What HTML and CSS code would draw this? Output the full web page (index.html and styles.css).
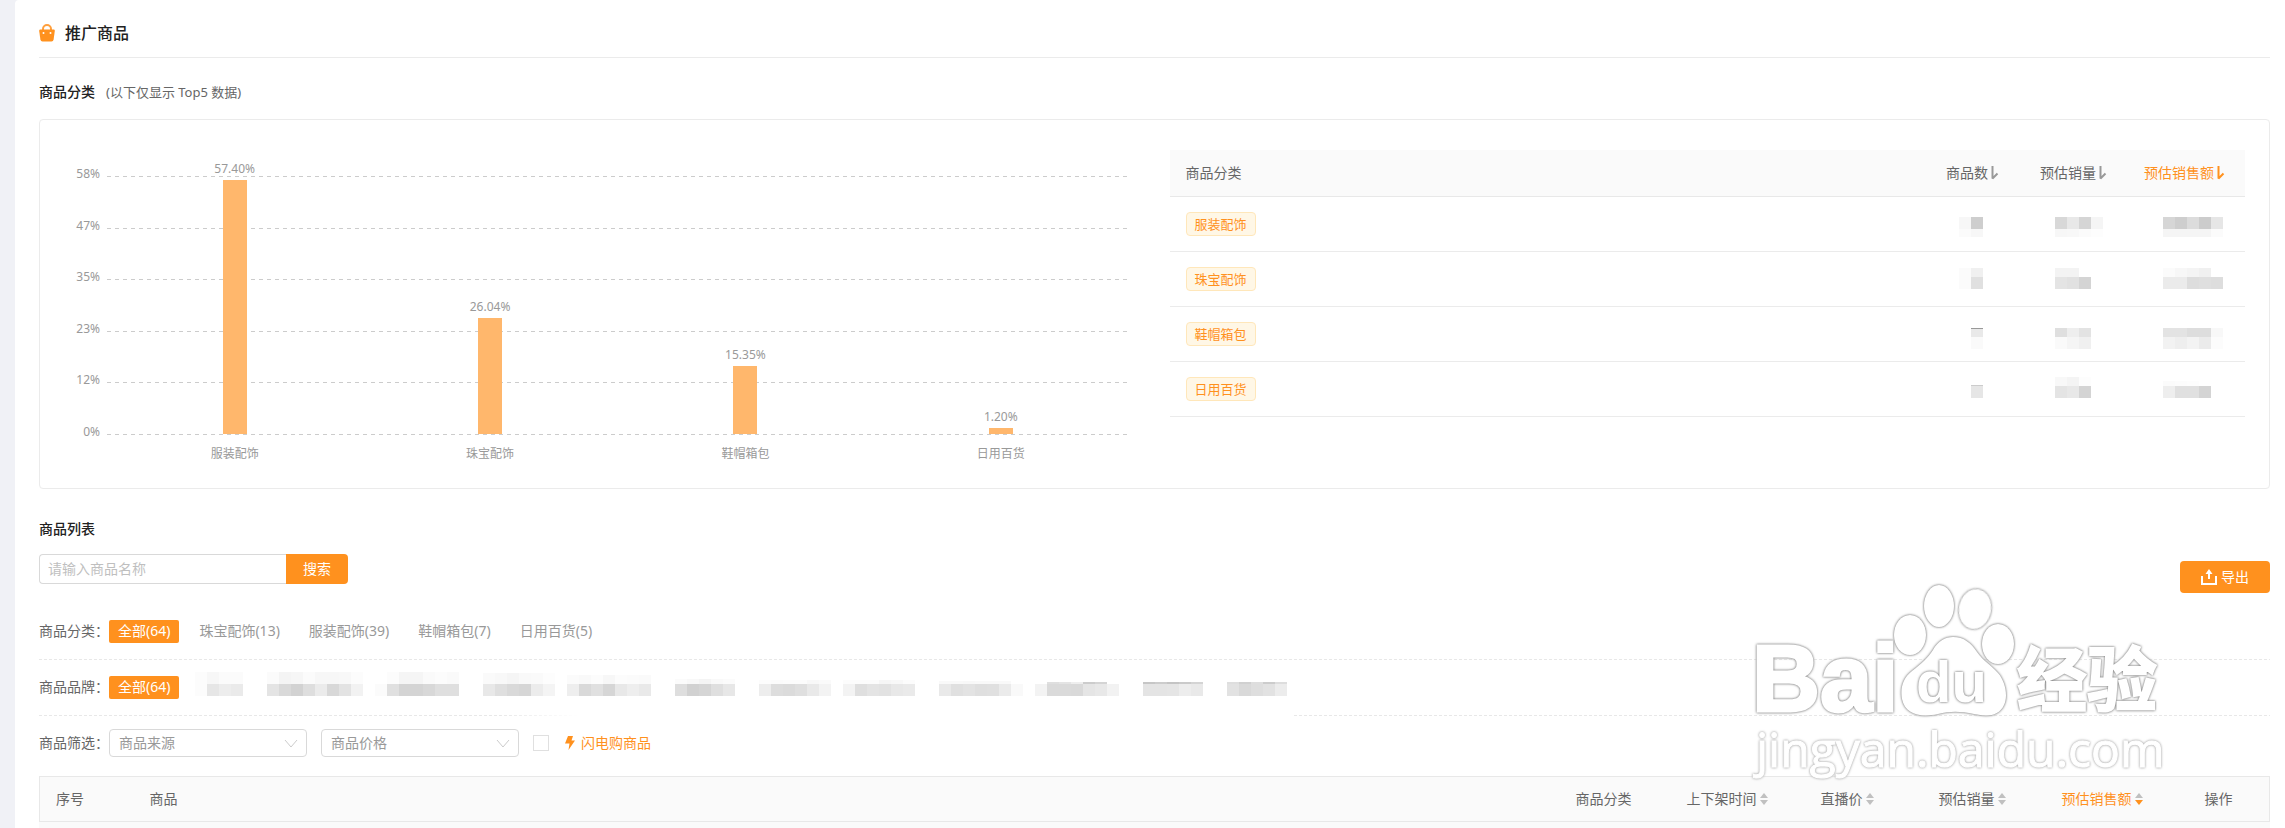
FILE: index.html
```html
<!DOCTYPE html>
<html lang="zh-CN">
<head>
    <meta charset="UTF-8">
    <meta name="viewport" content="width=device-width, initial-scale=1.0">
    <title>推广商品</title>
    <link rel="stylesheet" href="styles.css">
</head>
<body>
    <svg width="0" height="0" class="sprite" aria-hidden="true">
        <symbol id="arrow" viewBox="0 0 12 14">
            <path d="M1.500 0V12.500L6.500 7.500" fill="none" stroke="currentColor" stroke-width="2" stroke-linejoin="bevel"/>
        </symbol>
        <symbol id="chevron" viewBox="0 0 14 10">
            <path d="M1 1L7 8L13 1" fill="none" stroke="currentColor" stroke-width="1"/>
        </symbol>
    </svg>

    <main class="card">
        <header class="card-header">
            <svg class="bag-icon" width="16" height="18" viewBox="0 0 16 18">
                <path d="M4 7V5a4 4 0 0 1 8 0v2" fill="none" stroke="#ff9f3d" stroke-width="2"/>
                <path d="M1 5.500H15Q16 5.500 15.800 7L14.600 15.500Q14.300 17.500 12.500 17.500H3.500Q1.700 17.500 1.400 15.500L0.200 7Q0 5.500 1 5.500Z" fill="#ff911e"/>
                <circle cx="4.500" cy="9" r="1" fill="#fff"/>
                <circle cx="11.500" cy="9" r="1" fill="#fff"/>
            </svg>
            <h1>推广商品</h1>
        </header>

        <div class="section-title">
            <h2>商品分类</h2>
            <span class="tip">(以下仅显示 Top5 数据)</span>
        </div>

        <!-- 分类图表 + 分类表格 -->
        <section class="panel">
            <div class="chart">
                <div class="y-axis">
                    <span>58%</span><span>47%</span><span>35%</span><span>23%</span><span>12%</span><span>0%</span>
                </div>
                <div class="plot">
                    <div class="grid-lines"><i></i><i></i><i></i><i></i><i></i><i></i></div>
                    <div class="bars">
                        <div class="bar-col"><span>57.40%</span><div class="bar" style="height: 98.5%"></div></div>
                        <div class="bar-col"><span>26.04%</span><div class="bar" style="height: 44.9%"></div></div>
                        <div class="bar-col"><span>15.35%</span><div class="bar" style="height: 26.4%"></div></div>
                        <div class="bar-col"><span>1.20%</span><div class="bar" style="height: 2.3%"></div></div>
                    </div>
                </div>
                <div class="x-axis">
                    <span>服装配饰</span><span>珠宝配饰</span><span>鞋帽箱包</span><span>日用百货</span>
                </div>
            </div>

            <div class="category">
                <table class="category-table">
                    <thead>
                        <tr>
                            <th>商品分类</th>
                            <th class="num w-count"><button class="sort">商品数<svg width="12" height="14"><use href="#arrow"/></svg></button></th>
                            <th class="num w-sales"><button class="sort">预估销量<svg width="12" height="14"><use href="#arrow"/></svg></button></th>
                            <th class="num w-amount"><button class="sort active">预估销售额<svg width="12" height="14"><use href="#arrow"/></svg></button></th>
                        </tr>
                    </thead>
                    <tbody>
                        <tr>
                            <td><span class="tag">服装配饰</span></td>
                            <td class="num"><span class="mosaic" data-rows="5:ff|12:f7,ce,ff|8:fb,f7,ff"></span></td>
                            <td class="num"><span class="mosaic" data-rows="5:ff|12:d8,e8,d5,f5|8:f7,f8,fb,fd"></span></td>
                            <td class="num"><span class="mosaic" data-rows="5:ff|12:d6,ce,dc,cc,e6|8:f5,f5,f5,f5,fb"></span></td>
                        </tr>
                        <tr>
                            <td><span class="tag">珠宝配饰</span></td>
                            <td class="num"><span class="mosaic" data-rows="1:ff|9:fb,f0,ff|12:fb,e0,ff"></span></td>
                            <td class="num"><span class="mosaic" data-rows="1:ff|9:f3,f3,ff,ff|12:e4,e1,d4,ff"></span></td>
                            <td class="num"><span class="mosaic" data-rows="1:ff|9:fb,f7,f4,f0,ff|12:eb,eb,dd,df,dd"></span></td>
                        </tr>
                        <tr>
                            <td><span class="tag">鞋帽箱包</span></td>
                            <td class="num"><span class="mosaic" data-rows="6:ff|1:99,ff|8:e9,ff|12:fa,ff"></span></td>
                            <td class="num"><span class="mosaic" data-rows="6:ff|9:df,ee,e3,ff|12:fa,f5,f0,ff"></span></td>
                            <td class="num"><span class="mosaic" data-rows="6:ff|9:e3,e3,dd,dd,f8|12:f2,ee,f3,eb,fc"></span></td>
                        </tr>
                        <tr>
                            <td><span class="tag">日用百货</span></td>
                            <td class="num"><span class="mosaic" data-rows="8:ff|1:cc,ff|12:e6,ff"></span></td>
                            <td class="num"><span class="mosaic" data-rows="9:f8,f4,fd,ff|12:e4,e8,d4,ff"></span></td>
                            <td class="num"><span class="mosaic" data-rows="4:ff|5:fb,fc,fd,ff,ff|12:ee,e0,e0,d4,ff"></span></td>
                        </tr>
                    </tbody>
                </table>
            </div>
        </section>

        <h2 class="list-title">商品列表</h2>

        <div class="toolbar">
            <form class="search">
                <input type="text" placeholder="请输入商品名称" aria-label="商品名称">
                <button type="button">搜索</button>
            </form>
            <button class="export">
                <svg width="16" height="16" viewBox="0 0 16 16">
                    <path d="M1 7V15H15V7" fill="none" stroke="#fff" stroke-width="2"/>
                    <path d="M8 0L11.500 5H9V10H7V5H4.500Z" fill="#fff"/>
                </svg>
                导出
            </button>
        </div>

        <div class="filter-row dashed">
            <span class="filter-label">商品分类：</span>
            <a href="#" class="option selected">全部(64)</a>
            <a href="#" class="option">珠宝配饰(13)</a>
            <a href="#" class="option">服装配饰(39)</a>
            <a href="#" class="option">鞋帽箱包(7)</a>
            <a href="#" class="option">日用百货(5)</a>
        </div>

        <div class="filter-row dashed faded">
            <span class="filter-label">商品品牌：</span>
            <a href="#" class="option selected">全部(64)</a>
            <div class="brands">
                <span class="mosaic" data-rows="12:fc,f7,fb,fb,ff|12:fc,e6,ed,ea,ff"></span>
                <span class="mosaic" data-rows="12:fb,f4,f6,fb,f7,f7,f8,fc|12:e4,d9,d2,de,eb,d8,e3,f2"></span>
                <span class="mosaic" data-rows="12:ff,fc,f5,f5,fa,fc,fa,ff|12:fb,e0,d4,d4,d8,df,df,ff"></span>
                <span class="mosaic" data-rows="1:ff|11:fa,f8,f5,f9,fa,fd|12:e8,df,d9,d6,ec,f4"></span>
                <span class="mosaic" data-rows="3:ff|9:fb,f9,fc,f7,fc,fb,fa,ff|12:ee,d9,e0,d6,e8,ee,e9,ff"></span>
                <span class="mosaic" data-rows="7:ff|5:fb,f8,f4,f9,fb,ff|12:de,d1,d5,df,e7,ff"></span>
                <span class="mosaic" data-rows="8:ff|4:fc,fb,fc,fc,f8,fa|12:ed,dd,db,df,e9,f3"></span>
                <span class="mosaic" data-rows="8:ff|4:fc,fc,fc,f6,f8,fc,ff|12:f3,df,e4,e2,e8,ea,ff"></span>
                <span class="mosaic" data-rows="9:ff|3:f9,f9,f8,f9,f9,f9,ff|12:e9,e0,e3,df,e0,eb,f9"></span>
                <span class="mosaic" data-rows="10:ff|2:ff,df,e4,ee,cc,d4,ff,ff|12:f3,da,da,d9,e5,e8,f2,ff"></span>
                <span class="mosaic" data-rows="10:ff|2:c6,cc,c4,ca,d4,ff|12:e4,e4,e5,ed,e9,ff"></span>
                <span class="mosaic" data-rows="10:ff|2:de,d0,de,cc,dd|12:e2,d9,de,e2,ec"></span>
            </div>
        </div>

        <div class="filter-row">
            <span class="filter-label">商品筛选：</span>
            <div class="select-box">
                <select aria-label="商品来源">
                    <option>商品来源</option>
                </select>
                <svg width="14" height="10"><use href="#chevron"/></svg>
            </div>
            <div class="select-box">
                <select aria-label="商品价格">
                    <option>商品价格</option>
                </select>
                <svg width="14" height="10"><use href="#chevron"/></svg>
            </div>
            <input type="checkbox" id="flash" class="check">
            <label for="flash" class="flash">
                <svg width="10" height="14" viewBox="0 0 10 14"><path d="M3 0H8L6.500 4.500H10L3.500 14L4.500 7.500H0Z" fill="#ff911e"/></svg>
                闪电购商品
            </label>
        </div>

        <table class="goods-table">
            <thead>
                <tr>
                    <th class="w-index">序号</th>
                    <th>商品</th>
                    <th class="w-cat">商品分类</th>
                    <th class="w-time"><button class="sort">上下架时间<span class="carets"></span></button></th>
                    <th class="w-price"><button class="sort">直播价<span class="carets"></span></button></th>
                    <th class="w-volume"><button class="sort">预估销量<span class="carets"></span></button></th>
                    <th class="w-revenue"><button class="sort active">预估销售额<span class="carets"></span></button></th>
                    <th class="w-action">操作</th>
                </tr>
            </thead>
        </table>
        <div class="goods-body"></div>

        <svg class="watermark" width="440" height="222" viewBox="1740 574 440 222" aria-hidden="true">
            <text x="1752" y="711" class="wm-bai">Bai</text>
            <ellipse cx="1910" cy="635" rx="16" ry="20"/>
            <ellipse cx="1939" cy="606" rx="15" ry="21"/>
            <ellipse cx="1975" cy="609" rx="16" ry="20" transform="rotate(10 1975 609)"/>
            <ellipse cx="1998" cy="644" rx="16" ry="20"/>
            <path d="M1953 637C1964 637 1971 643 1977 652C1983 661 1990 664 1998 673C2006 682 2008 697 2004 705C1999 716 1988 717 1974 714C1960 711 1950 711 1938 714C1920 718 1905 714 1902 699C1900 688 1903 678 1912 671C1922 663 1928 658 1933 650C1938 641 1945 637 1953 637Z"/>
            <text x="1916" y="702" class="wm-du">du</text>
            <text x="2017" y="706" class="wm-cn">经验</text>
            <text x="1756" y="767" class="wm-url">jingyan.baidu.com</text>
        </svg>
    </main>

    <script>
        // 打码数据块，格式：行高:灰度,灰度|行高:灰度...
        document.querySelectorAll('.mosaic').forEach(el => {
            el.dataset.rows.split('|').forEach(row => {
                const [height, cells] = row.split(':');
                const line = document.createElement('span');
                line.className = 'mosaic-row';
                line.style.height = height + 'px';
                cells.split(',').forEach(c => {
                    const cell = document.createElement('i');
                    cell.style.background = '#' + c + c + c;
                    line.appendChild(cell);
                });
                el.appendChild(line);
            });
        });
    </script>
</body>
</html>
```
FILE: styles.css
```css
* {
    margin: 0;
    padding: 0;
    box-sizing: border-box;
}

body {
    background-color: #f0f1f6;
    color: #666;
    font-family: "Noto Sans", "Noto Sans CJK SC", sans-serif;
    font-size: 14px;
    line-height: 20px;
}

button,
input,
select {
    font: inherit;
    color: inherit;
    border: none;
    background: none;
}

button {
    cursor: pointer;
}

.sprite {
    position: absolute;
}

.card {
    position: relative;
    display: flex;
    flex-direction: column;
    min-height: 100vh;
    margin-left: 15px;
    padding: 0 15px 0 24px;
    background-color: #fff;
    border-top-left-radius: 4px;
}

.card-header {
    display: flex;
    align-items: center;
    gap: 10px;
    height: 58px;
    padding-top: 8px;
    border-bottom: 1px solid #ebebeb;
}

h1 {
    font-size: 16px;
    font-weight: 500;
    color: #222;
}

h2 {
    font-size: 14px;
    font-weight: 500;
    color: #222;
}

.section-title {
    display: flex;
    align-items: center;
    gap: 11px;
    margin: 24px 0 17px;
}

.tip {
    font-size: 13px;
}

.panel {
    display: grid;
    grid-template-columns: 1fr 1fr;
    border: 1px solid #ebebeb;
    border-radius: 4px;
}

/* chart */
.chart {
    display: grid;
    grid-template-columns: 60px 1fr;
    column-gap: 7px;
    padding: 46px 26px 26px 0;
    font-size: 12px;
    line-height: 16px;
    color: #999;
}

.y-axis {
    display: flex;
    flex-direction: column;
    justify-content: space-between;
    height: 274px;
    text-align: right;
}

.plot {
    display: grid;
    height: 259px;
    margin-top: 10px;
}

.grid-lines,
.bars {
    grid-area: 1 / 1;
}

.grid-lines {
    display: flex;
    flex-direction: column;
    justify-content: space-between;
}

.grid-lines i {
    height: 1px;
    background: repeating-linear-gradient(to right, #ccc 0 4px, transparent 4px 8px);
}

.bars,
.x-axis {
    display: grid;
    grid-template-columns: repeat(4, 1fr);
}

.bar-col {
    display: flex;
    flex-direction: column;
    align-items: center;
    justify-content: flex-end;
    height: 258px;
}

.bar-col span {
    margin-bottom: 3px;
}

.bar {
    flex-shrink: 0;
    width: 24px;
    background-color: #ffb76c;
}

.x-axis {
    grid-column: 2;
    margin-top: 6px;
    text-align: center;
}

/* tables */
table {
    width: 100%;
    border-collapse: collapse;
    table-layout: fixed;
}

th {
    padding: 0 16px;
    font-weight: 400;
    text-align: left;
    white-space: nowrap;
}

.category {
    padding: 30px 24px 0 15px;
}

.category-table th {
    height: 46px;
    background-color: #fafafa;
    border-bottom: 1px solid #e8e8e8;
}

.category-table td {
    height: 55px;
    padding: 15px 16px 0;
    vertical-align: top;
    border-bottom: 1px solid #ebebeb;
}

.category-table th.num {
    padding-left: 0;
    text-align: right;
}

.category-table td.num {
    padding: 15px 24px 0 0;
    text-align: right;
}

.category-table td.num:last-child {
    padding-right: 22px;
}

.w-count { width: 108px; }
.w-sales { width: 108px; }
.w-amount { width: 118px; }

.sort {
    display: inline-flex;
    align-items: center;
    gap: 3px;
}

.sort svg {
    color: #999;
}

.sort.active,
.sort.active svg {
    color: #ff911e;
}

.tag {
    display: inline-block;
    padding: 1px 8px;
    border: 1px solid #ffe7ba;
    border-radius: 4px;
    background-color: #fff7e6;
    font-size: 13px;
    color: #ff911e;
}

.mosaic {
    display: inline-block;
    vertical-align: top;
}

.mosaic-row {
    display: flex;
}

.mosaic-row i {
    width: 12px;
}

/* list */
.list-title {
    margin: 30px 0 15px;
}

.toolbar {
    display: flex;
    justify-content: space-between;
    margin-bottom: 11px;
}

.search {
    display: flex;
    height: 30px;
}

.search input {
    width: 247px;
    padding: 0 8px;
    border: 1px solid #d9d9d9;
    border-right: none;
    border-radius: 4px 0 0 4px;
}

.search input::placeholder {
    color: #bfbfbf;
}

.search button {
    width: 62px;
    border-radius: 0 4px 4px 0;
    background-color: #ff911e;
    color: #fff;
}

.export {
    display: flex;
    align-items: center;
    justify-content: center;
    gap: 4px;
    width: 90px;
    height: 32px;
    margin-top: 7px;
    border-radius: 4px;
    background-color: #ff911e;
    color: #fff;
}

.filter-row {
    display: flex;
    align-items: center;
    height: 56px;
    padding-bottom: 2px;
}

.dashed {
    background: repeating-linear-gradient(to right, #e8e8e8 0 3px, transparent 3px 5px) left bottom / 100% 1px no-repeat;
}

.dashed.faded {
    background:
        linear-gradient(to right, transparent, #fff 80px) 460px bottom / 794px 1px no-repeat,
        repeating-linear-gradient(to right, #e8e8e8 0 3px, transparent 3px 5px) left bottom / 100% 1px no-repeat;
}

.filter-label {
    width: 70px;
    white-space: nowrap;
}

.option {
    margin-right: 11px;
    padding: 1px 9px 2px;
    border-radius: 2px;
    color: #999;
    text-decoration: none;
}

.option.selected {
    background-color: #ff911e;
    color: #fff;
}

.brands {
    display: flex;
    align-self: flex-start;
    gap: 12px;
    margin: 12px 0 0 5px;
}

.select-box {
    position: relative;
    width: 198px;
    margin-right: 14px;
}

.select-box select {
    width: 100%;
    height: 28px;
    padding: 0 9px;
    border: 1px solid #d9d9d9;
    border-radius: 4px;
    background-color: #fff;
    color: #999;
    appearance: none;
}

.select-box svg {
    position: absolute;
    top: 10px;
    right: 9px;
    color: #ccc;
    pointer-events: none;
}

.check {
    width: 16px;
    height: 16px;
    border: 1px solid #e0e0e0;
    appearance: none;
}

.flash {
    display: flex;
    align-items: center;
    gap: 6px;
    margin-left: 16px;
    color: #ff911e;
}

.goods-table {
    margin-top: 4px;
    background-color: #fafafa;
    border: 1px solid #e8e8e8;
}

.goods-table th {
    height: 45px;
}

.w-index { width: 94px; }
.w-cat { width: 111px; }
.w-time { width: 134px; }
.w-price { width: 118px; }
.w-volume { width: 123px; }
.w-revenue { width: 143px; }
.w-action { width: 81px; }

.carets {
    display: flex;
    flex-direction: column;
    gap: 2px;
}

.carets::before,
.carets::after {
    content: "";
    border: 4px solid transparent;
}

.carets::before {
    border-top: none;
    border-bottom: 5px solid #c0c0c0;
}

.carets::after {
    border-bottom: none;
    border-top: 5px solid #c0c0c0;
}

.sort.active .carets::after {
    border-top-color: #ff911e;
}

.goods-body {
    flex: 1;
    background-color: #fafafa;
}

/* watermark */
.watermark {
    position: absolute;
    top: 574px;
    right: 105px;
    pointer-events: none;
    fill: #fff;
}

.watermark > * {
    filter: drop-shadow(0 0 1px #777) drop-shadow(0 0 1px #ccc);
}

.watermark .wm-url {
    filter: drop-shadow(0 0 1px #aaa) drop-shadow(0 0 1px #ddd);
}

.wm-bai,
.wm-du,
.wm-cn {
    font-weight: 700;
    stroke: #fff;
}

.wm-bai {
    font-family: "Liberation Sans", sans-serif;
    font-size: 94px;
    stroke-width: 3px;
}

.wm-du {
    font-family: "Liberation Sans", sans-serif;
    font-size: 58px;
    stroke-width: 0;
}

.wm-cn {
    font-family: "Noto Sans CJK SC", sans-serif;
    font-size: 70px;
    stroke-width: 2px;
}

.wm-url {
    font-family: "Open Sans", sans-serif;
    font-size: 48px;
    stroke: #fff;
    stroke-width: 1px;
}
```
